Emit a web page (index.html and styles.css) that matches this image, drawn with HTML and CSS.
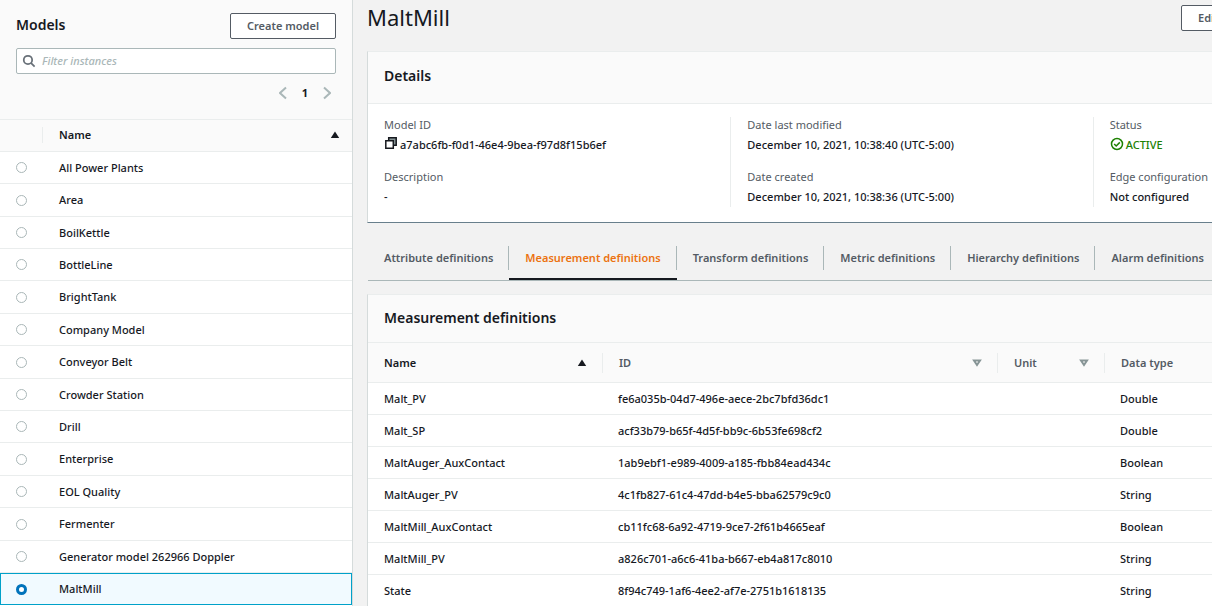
FILE: index.html
```html
<!DOCTYPE html>
<html lang="en">
<head>
<meta charset="utf-8">
<title>MaltMill</title>
<link rel="stylesheet" href="styles.css">
</head>
<body>
<div class="app">
  <aside class="sidebar">
    <div class="sidebar-tools">
      <div class="sidebar-heading">
        <h2 class="section-title">Models</h2>
        <button class="button" type="button">Create model</button>
      </div>
      <label class="search">
        <svg class="search-icon" viewBox="0 0 16 16" aria-hidden="true"><circle cx="6.8" cy="6.8" r="4.8"/><path d="M10.2 10.2 14.4 14.4"/></svg>
        <input class="search-input" type="text" placeholder="Filter instances" aria-label="Filter instances">
      </label>
      <nav class="pager" aria-label="Pages">
        <button class="pager-arrow" type="button" aria-label="Previous page"><svg viewBox="0 0 8 14"><path d="M7 1.500 1 7l6 5.500"/></svg></button>
        <span class="pager-page">1</span>
        <button class="pager-arrow" type="button" aria-label="Next page"><svg viewBox="0 0 8 14"><path d="m1 1.500 6 5.500-6 5.500"/></svg></button>
      </nav>
    </div>
    <table class="models">
      <colgroup><col class="col-select"><col></colgroup>
      <thead>
        <tr><th><span class="divider"></span></th><th><span class="sortable">Name<svg class="sort" viewBox="0 0 10 8"><path d="M5 .5 9.200 7H.8z"/></svg></span></th></tr>
      </thead>
      <tbody>
        <tr><td><input class="radio" type="radio" name="model" id="m1"></td><td><label for="m1">All Power Plants</label></td></tr>
        <tr><td><input class="radio" type="radio" name="model" id="m2"></td><td><label for="m2">Area</label></td></tr>
        <tr><td><input class="radio" type="radio" name="model" id="m3"></td><td><label for="m3">BoilKettle</label></td></tr>
        <tr><td><input class="radio" type="radio" name="model" id="m4"></td><td><label for="m4">BottleLine</label></td></tr>
        <tr><td><input class="radio" type="radio" name="model" id="m5"></td><td><label for="m5">BrightTank</label></td></tr>
        <tr><td><input class="radio" type="radio" name="model" id="m6"></td><td><label for="m6">Company Model</label></td></tr>
        <tr><td><input class="radio" type="radio" name="model" id="m7"></td><td><label for="m7">Conveyor Belt</label></td></tr>
        <tr><td><input class="radio" type="radio" name="model" id="m8"></td><td><label for="m8">Crowder Station</label></td></tr>
        <tr><td><input class="radio" type="radio" name="model" id="m9"></td><td><label for="m9">Drill</label></td></tr>
        <tr><td><input class="radio" type="radio" name="model" id="m10"></td><td><label for="m10">Enterprise</label></td></tr>
        <tr><td><input class="radio" type="radio" name="model" id="m11"></td><td><label for="m11">EOL Quality</label></td></tr>
        <tr><td><input class="radio" type="radio" name="model" id="m12"></td><td><label for="m12">Fermenter</label></td></tr>
        <tr><td><input class="radio" type="radio" name="model" id="m13"></td><td><label for="m13">Generator model 262966 Doppler</label></td></tr>
        <tr class="selected"><td><input class="radio" type="radio" name="model" id="m14" checked></td><td><label for="m14">MaltMill</label></td></tr>
      </tbody>
    </table>
  </aside>

  <main class="main">
    <div class="content">
      <header class="page-header">
        <h1 class="page-title">MaltMill</h1>
        <div class="page-actions"><button class="button" type="button">Edit</button></div>
      </header>

      <section class="panel details">
        <div class="panel-header"><h2 class="section-title">Details</h2></div>
        <div class="details-body">
          <dl class="details-column">
            <dt>Model ID</dt>
            <dd><svg class="copy-icon" viewBox="0 0 12 12"><path class="copy-back" d="M3.700 3V.8h7.500v7.500H9"/><path class="copy-front" d="M.8 3.700h7.500v7.500H.8z"/></svg>a7abc6fb-f0d1-46e4-9bea-f97d8f15b6ef</dd>
            <dt>Description</dt>
            <dd>-</dd>
          </dl>
          <dl class="details-column">
            <dt>Date last modified</dt>
            <dd>December 10, 2021, 10:38:40 (UTC-5:00)</dd>
            <dt>Date created</dt>
            <dd>December 10, 2021, 10:38:36 (UTC-5:00)</dd>
          </dl>
          <dl class="details-column">
            <dt>Status</dt>
            <dd class="active"><svg class="status-icon" viewBox="0 0 14 14"><circle cx="7" cy="7" r="5.500"/><path d="m4.200 7 2 2 3.600-3.600"/></svg>ACTIVE</dd>
            <dt>Edge configuration</dt>
            <dd>Not configured</dd>
          </dl>
        </div>
      </section>

      <div class="tabs" role="tablist">
        <button class="tab" type="button" role="tab">Attribute definitions</button>
        <button class="tab current" type="button" role="tab" aria-selected="true">Measurement definitions</button>
        <button class="tab" type="button" role="tab">Transform definitions</button>
        <button class="tab" type="button" role="tab">Metric definitions</button>
        <button class="tab" type="button" role="tab">Hierarchy definitions</button>
        <button class="tab" type="button" role="tab">Alarm definitions</button>
      </div>

      <section class="panel measurements">
        <div class="panel-header"><h2 class="section-title">Measurement definitions</h2></div>
        <table class="definitions">
          <colgroup><col class="col-name"><col class="col-id"><col class="col-unit"><col></colgroup>
          <thead>
            <tr>
              <th class="sorted"><span class="sortable">Name<svg class="sort" viewBox="0 0 10 8"><path d="M5 .5 9.200 7H.8z"/></svg></span></th>
              <th><span class="sortable">ID<svg class="sort idle" viewBox="0 0 10 8"><path d="M2 1.500h6L5 6z"/></svg></span></th>
              <th><span class="sortable">Unit<svg class="sort idle" viewBox="0 0 10 8"><path d="M2 1.500h6L5 6z"/></svg></span></th>
              <th><span class="sortable">Data type</span></th>
            </tr>
          </thead>
          <tbody>
            <tr><td>Malt_PV</td><td>fe6a035b-04d7-496e-aece-2bc7bfd36dc1</td><td></td><td>Double</td></tr>
            <tr><td>Malt_SP</td><td>acf33b79-b65f-4d5f-bb9c-6b53fe698cf2</td><td></td><td>Double</td></tr>
            <tr><td>MaltAuger_AuxContact</td><td>1ab9ebf1-e989-4009-a185-fbb84ead434c</td><td></td><td>Boolean</td></tr>
            <tr><td>MaltAuger_PV</td><td>4c1fb827-61c4-47dd-b4e5-bba62579c9c0</td><td></td><td>String</td></tr>
            <tr><td>MaltMill_AuxContact</td><td>cb11fc68-6a92-4719-9ce7-2f61b4665eaf</td><td></td><td>Boolean</td></tr>
            <tr><td>MaltMill_PV</td><td>a826c701-a6c6-41ba-b667-eb4a817c8010</td><td></td><td>String</td></tr>
            <tr><td>State</td><td>8f94c749-1af6-4ee2-af7e-2751b1618135</td><td></td><td>String</td></tr>
          </tbody>
        </table>
      </section>
    </div>
  </main>
</div>
</body>
</html>
```
FILE: styles.css
```css
* { box-sizing: border-box; }

body {
  margin: 0;
  background: #f2f2f2;
  color: #16191f;
  font: 500 11px/16px "Noto Sans", "Open Sans", sans-serif;
}

button, input { font: inherit; color: inherit; }
h1, h2, dl, dd { margin: 0; }
svg { fill: none; stroke: currentColor; display: block; }

.app { display: flex; height: 100vh; overflow: hidden; }

.section-title { font-size: 14px; line-height: 18px; font-weight: 600; }

.button {
  height: 26px;
  padding: 0 16px;
  border: 1px solid #545b64;
  border-radius: 2px;
  background: #fff;
  color: #545b64;
  font-weight: 600;
  white-space: nowrap;
}

/* Model list */
.sidebar {
  flex: 0 0 353px;
  border-right: 1px solid #d5dbdb;
  background: #fff;
}

.sidebar-tools {
  padding: 13px 16px 17px;
  background: #fafafa;
  border-bottom: 1px solid #eaeded;
}

.sidebar-heading { display: flex; justify-content: space-between; align-items: flex-start; }
.sidebar-heading .section-title { padding-top: 3px; }

.search {
  display: flex;
  align-items: center;
  gap: 6px;
  height: 26px;
  margin-top: 9px;
  padding: 0 5px;
  border: 1px solid #aab7b8;
  border-radius: 2px;
  background: #fff;
}
.search-icon { flex: none; width: 14px; height: 14px; color: #687078; stroke-width: 2; }
.search-input { flex: 1; min-width: 0; padding: 0; border: 0; outline: 0; background: none; }
.search-input::placeholder { color: #aab7b8; font-style: italic; opacity: 1; }

.pager { display: flex; justify-content: flex-end; align-items: center; gap: 15px; margin-top: 11px; padding: 0 5px 1px; }
.pager-arrow { width: 8px; height: 14px; padding: 0; border: 0; background: none; color: #aab7b8; }
.pager-arrow svg { width: 8px; height: 14px; stroke-width: 2; }
.pager-page { font-weight: 700; }

table { width: 100%; border-collapse: separate; border-spacing: 0; table-layout: fixed; }
th { text-align: left; font-weight: 600; background: #fafafa; }
th, td { padding: 0; border-bottom: 1px solid #eaeded; }

.sortable { display: flex; justify-content: space-between; align-items: center; }
.sort { width: 10px; height: 8px; fill: currentColor; stroke: none; }
.sort.idle { fill: none; stroke: #879596; stroke-width: 2; }

.models th { height: 32px; padding-bottom: 1px; }
.models .sortable { padding: 0 12px 0 16px; }
.models td { height: 32px; }
.models tbody tr:nth-child(5n+2) td,
.models tbody tr:nth-child(5n+5) td { height: 33px; }
.models td:first-child { padding-left: 16px; }
.models td:last-child { padding-left: 16px; }
.col-select { width: 43px; }
.divider { display: block; height: 16px; border-right: 1px solid #eaeded; }

.radio {
  appearance: none;
  display: block;
  width: 11px;
  height: 11px;
  margin: 0;
  border: 1px solid #aab7b8;
  border-radius: 50%;
  background: #fff;
}
.radio:checked { border: 3px solid #0073bb; }

.selected td { background: #f1faff; border: 1px solid #00a1c9; }
.models .selected td:first-child { border-right: 0; padding-left: 15px; }
.selected td:last-child { border-left: 0; }

/* Model page */
.main { flex: 1; min-width: 0; overflow: hidden; padding-left: 14px; }
.content { min-width: 1089px; }

.page-header { display: flex; justify-content: space-between; align-items: center; height: 35px; }
.page-title { font-size: 22px; line-height: 32px; font-weight: 400; padding-bottom: 2px; }
.page-actions { flex: 0 0 275px; }

.panel { border: 1px solid #eaeded; border-left-color: #d5dbdb; background: #fff; }
.panel-header { display: flex; align-items: center; padding: 14px 16px 15px; background: #fafafa; border-bottom: 1px solid #eaeded; }

.details { margin-top: 16px; border-bottom-color: #687f8c; }
.details .panel-header { padding: 15px 16px 18px; }
.details-body { display: grid; grid-template-columns: repeat(3, 1fr); padding: 13px 0 15px; }
.details-column { padding: 0 16px; }
.details-column + .details-column { border-left: 1px solid #eaeded; }
.details-column dt { color: #545b64; line-height: 16px; font-weight: 400; }
.details-column dd { display: flex; align-items: center; height: 22px; padding-top: 1px; }
.details-column dd + dt { margin-top: 14px; }
.copy-icon { width: 12px; height: 12px; margin: 0 3px 3px 1px; stroke-width: 1.500; }
.copy-back { fill: #879596; }
.copy-front { fill: #fff; }
.status-icon { width: 14px; height: 14px; margin: 0 2px 1px 0; stroke-width: 1.500; }
.active { color: #1d8102; }

.tabs { display: flex; margin-left: 1px; margin-top: 16px; border-bottom: 1px solid #aab7b8; }
.tab {
  display: flex;
  align-items: center;
  height: 41px;
  padding: 0 0 2px;
  border: 0;
  border-bottom: 2px solid transparent;
  background: none;
  color: #545b64;
  font-weight: 600;
  white-space: nowrap;
}
.tab::before { content: ""; width: 16px; height: 24px; }
.tab::after { content: ""; width: 15px; height: 24px; border-right: 1px solid #aab7b8; }
.tab:last-child::after { border: 0; }
.tab.current { color: #ec7211; border-bottom-color: #16191f; }

.measurements { margin-top: 13px; }
.definitions th { height: 40px; color: #545b64; }
.definitions th.sorted { color: #16191f; }
.definitions .sortable { height: 20px; padding: 0 15px 0 16px; }
.definitions th + th .sortable { border-left: 1px solid #eaeded; }
.definitions td { height: 32px; padding-left: 16px; }
.col-name { width: 234px; }
.col-id { width: 395px; }
.col-unit { width: 107px; }
```
